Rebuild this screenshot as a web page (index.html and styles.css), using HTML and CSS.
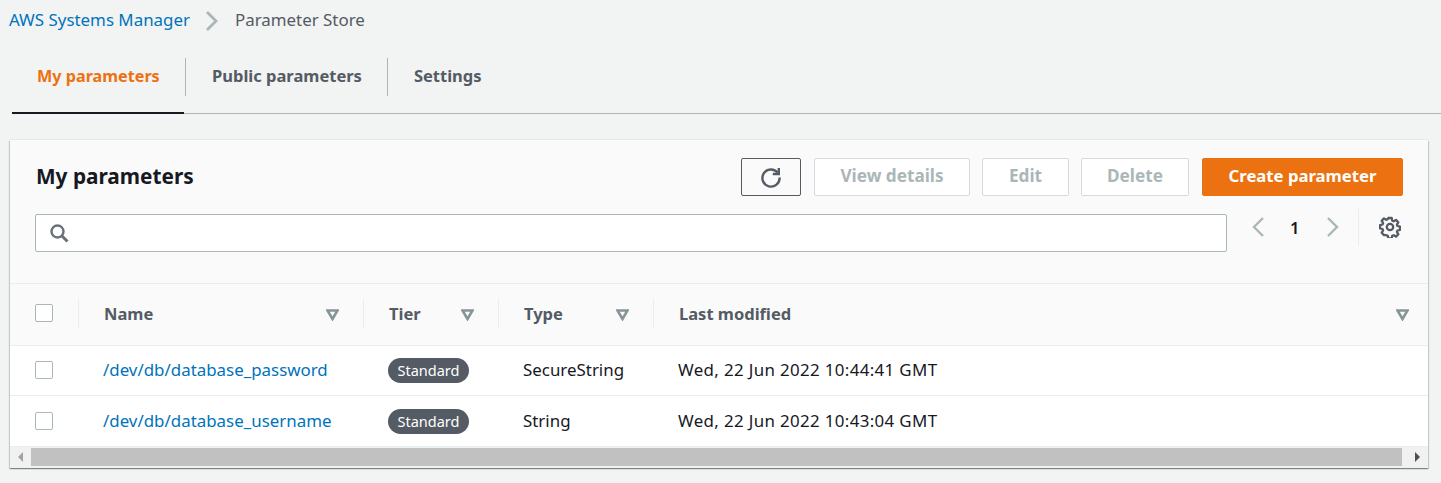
FILE: index.html
```html
<!DOCTYPE html>
<html lang="en">
<head>
    <meta charset="UTF-8">
    <meta name="viewport" content="width=device-width, initial-scale=1.0">
    <title>Parameter Store</title>
    <link rel="stylesheet" href="styles.css">
</head>
<body>
    <nav class="breadcrumb">
        <a href="#">AWS Systems Manager</a>
        <svg class="crumb-arrow" width="14" height="22" viewBox="0 0 14 22"><path d="M2 2l9 9-9 9" fill="none" stroke="#aab7b8" stroke-width="2.800"/></svg>
        <span>Parameter Store</span>
    </nav>

    <div class="tabs">
        <a class="tab active" href="#">My parameters</a>
        <a class="tab" href="#">Public parameters</a>
        <a class="tab" href="#">Settings</a>
    </div>

    <section class="card">
        <div class="card-top">
            <div class="title-row">
                <h1>My parameters</h1>
                <div class="actions">
                    <button class="btn refresh" aria-label="Refresh">
                        <svg width="22" height="22" viewBox="0 0 22 22"><path d="M17.600 6.500A8.600 8.600 0 1 0 19.600 11.500" fill="none" stroke="#545b64" stroke-width="2.400"/><path d="M18.800 2v6h-6" fill="none" stroke="#545b64" stroke-width="2.400"/></svg>
                    </button>
                    <button class="btn disabled details">View details</button>
                    <button class="btn disabled edit">Edit</button>
                    <button class="btn disabled delete">Delete</button>
                    <button class="btn primary">Create parameter</button>
                </div>
            </div>
            <div class="search-row">
                <div class="search">
                    <svg width="20" height="20" viewBox="0 0 20 20"><circle cx="8.500" cy="8.500" r="6" fill="none" stroke="#687078" stroke-width="2.400"/><path d="M13 13l5.500 5.500" stroke="#687078" stroke-width="3"/></svg>
                </div>
                <div class="pager">
                    <svg width="14" height="22" viewBox="0 0 14 22"><path d="M12 2L3 11l9 9" fill="none" stroke="#aab7b8" stroke-width="2.400"/></svg>
                    <span class="page-num">1</span>
                    <svg class="pager-next" width="14" height="22" viewBox="0 0 14 22"><path d="M2 2l9 9-9 9" fill="none" stroke="#aab7b8" stroke-width="2.400"/></svg>
                </div>
                <div class="prefs">
                    <svg width="22" height="22" viewBox="0 0 22 22"><path d="M9.300 2h3.400l.5 2.600 1.500.7 2.300-1.400 2.300 2.400-1.400 2.200.6 1.500 2.500.6v3.300l-2.500.6-.6 1.500 1.400 2.200-2.300 2.400-2.300-1.400-1.500.6-.5 2.700H9.300l-.5-2.700-1.500-.6L5 19.100l-2.300-2.400 1.400-2.200-.6-1.500-2.500-.6V9.100l2.500-.6.600-1.500-1.400-2.200L5 2.400l2.300 1.400 1.500-.7z" fill="none" stroke="#545b64" stroke-width="2.300" stroke-linejoin="round"/><circle cx="11" cy="11" r="3.200" fill="none" stroke="#545b64" stroke-width="2.300"/></svg>
                </div>
            </div>
        </div>

        <table class="params">
            <colgroup>
                <col class="col-check">
                <col class="col-name">
                <col class="col-tier">
                <col class="col-type">
                <col>
            </colgroup>
            <thead>
                <tr>
                    <th><span class="checkbox"></span></th>
                    <th><div class="th-inner"><span class="th-label">Name</span><svg class="sort" width="13" height="12" viewBox="0 0 13 12"><path d="M1.500 1.500h10L6.500 10z" fill="none" stroke="#879596" stroke-width="2.600"/></svg></div></th>
                    <th><div class="th-inner"><span class="th-label">Tier</span><svg class="sort" width="13" height="12" viewBox="0 0 13 12"><path d="M1.500 1.500h10L6.500 10z" fill="none" stroke="#879596" stroke-width="2.600"/></svg></div></th>
                    <th><div class="th-inner"><span class="th-label">Type</span><svg class="sort" width="13" height="12" viewBox="0 0 13 12"><path d="M1.500 1.500h10L6.500 10z" fill="none" stroke="#879596" stroke-width="2.600"/></svg></div></th>
                    <th><div class="th-inner last"><span class="th-label">Last modified</span><svg class="sort" width="13" height="12" viewBox="0 0 13 12"><path d="M1.500 1.500h10L6.500 10z" fill="none" stroke="#879596" stroke-width="2.600"/></svg></div></th>
                </tr>
            </thead>
            <tbody>
                <tr>
                    <td><span class="checkbox"></span></td>
                    <td><a href="#">/dev/db/database_password</a></td>
                    <td><span class="badge">Standard</span></td>
                    <td>SecureString</td>
                    <td class="date">Wed, 22 Jun 2022 10:44:41 GMT</td>
                </tr>
                <tr class="row-last">
                    <td><span class="checkbox"></span></td>
                    <td><a href="#">/dev/db/database_username</a></td>
                    <td><span class="badge">Standard</span></td>
                    <td>String</td>
                    <td class="date">Wed, 22 Jun 2022 10:43:04 GMT</td>
                </tr>
            </tbody>
        </table>

        <div class="scrollbar">
            <span class="arrow left"></span>
            <span class="thumb"></span>
            <span class="arrow right"></span>
        </div>
    </section>
</body>
</html>
```

FILE: styles.css
```css
* {
    box-sizing: border-box;
}
body {
    margin: 0;
    height: 483px;
    overflow: hidden;
    background-color: #f2f3f3;
    font-family: "Noto Sans", Arial, sans-serif;
    font-size: 16.9px;
    color: #16191f;
}
a {
    color: #0073bb;
    text-decoration: none;
}
.breadcrumb {
    display: flex;
    align-items: center;
    height: 40px;
    padding: 0 0 2px 9px;
    color: #545b64;
}
.crumb-arrow {
    margin: 4px 16px 0 15px;
}
.tabs {
    display: flex;
    height: 74px;
    margin-left: 12px;
    border-bottom: 1px solid #aab7b8;
}
.tab {
    display: flex;
    align-items: center;
    height: 38px;
    margin-top: 18px;
    padding: 0 25px 3px 26px;
    border-left: 1px solid #aab7b8;
    color: #545b64;
    font-size: 16.500px;
    font-weight: 700;
    white-space: nowrap;
}
.tab.active {
    position: relative;
    width: 173px;
    padding-left: 25px;
    padding-right: 0;
    border-left: none;
    color: #ec7211;
    font-size: 16.200px;
}
.tab.active::after {
    content: "";
    position: absolute;
    left: 0;
    right: 1px;
    top: 54px;
    height: 2px;
    background-color: #16191f;
}
.card {
    margin: 26px 13px 0 10px;
    background: white;
    box-shadow: 0 -1px 0 0 #e6e9e9, 0 1px 1px 0 rgba(0, 28, 36, 0.3), 1px 1px 1px 0 rgba(0, 28, 36, 0.15), -1px 1px 1px 0 rgba(0, 28, 36, 0.15);
}
.card-top {
    height: 144px;
    padding: 18px 25px 0 25px;
    background-color: #fafafa;
    border-bottom: 1px solid #eaeded;
}
.title-row {
    display: flex;
    justify-content: space-between;
    align-items: center;
    height: 38px;
}
h1 {
    margin: -2px 0 0 1px;
    font-size: 20.800px;
    font-weight: 700;
}
.actions {
    display: flex;
    gap: 12px;
}
.btn {
    height: 38px;
    padding: 0 0 3px 0;
    border: 1px solid #d5dbdb;
    border-radius: 2px;
    background: white;
    font-family: inherit;
    font-size: 16.700px;
    font-weight: 700;
}
.refresh {
    width: 60px;
    margin-right: 1px;
    padding: 0;
    border-color: #545b64;
    background: #fafafa;
    display: flex;
    align-items: center;
    justify-content: center;
}
.disabled {
    color: #aab7b8;
    font-size: 17.200px;
}
.details {
    width: 156px;
}
.edit {
    width: 87px;
}
.delete {
    width: 108px;
    margin-right: 1px;
}
.primary {
    width: 201px;
    border-color: #ec7211;
    background-color: #ec7211;
    color: white;
}
.search-row {
    display: flex;
    align-items: flex-start;
    margin-top: 18px;
}
.search {
    display: flex;
    align-items: center;
    width: 1192px;
    height: 38px;
    padding-left: 13px;
    background: white;
    border: 1px solid #aab7b8;
    border-radius: 2px;
}
.pager {
    display: flex;
    align-items: center;
    height: 26px;
    margin-left: 24px;
    gap: 25px;
}
.pager-next {
    margin-left: 2px;
}
.page-num {
    color: #16191f;
    font-size: 16.500px;
    font-weight: 600;
}
.prefs {
    display: flex;
    align-items: center;
    height: 37px;
    margin-top: -5px;
    margin-left: 18px;
    padding: 0 0 2px 20px;
    border-left: 1px solid #eaeded;
}
.params {
    width: 100%;
    border-collapse: collapse;
    table-layout: fixed;
}
.col-check {
    width: 68px;
}
.col-name {
    width: 285px;
}
.col-tier {
    width: 135px;
}
.col-type {
    width: 155px;
}
th {
    height: 61px;
    padding: 0;
    background-color: #fafafa;
    border-bottom: 1px solid #eaeded;
    font-size: 16.500px;
    font-weight: 700;
    color: #545b64;
    text-align: left;
}
th:first-child {
    padding: 0 0 3px 25px;
}
.th-inner {
    display: flex;
    justify-content: space-between;
    align-items: center;
    height: 30px;
    padding: 0 24px 0 25px;
    border-left: 1px solid #eaeded;
}
.th-inner.last {
    padding-right: 19px;
}
.th-label {
    margin-bottom: 2px;
}
.sort {
    margin-top: 1px;
}
td {
    height: 50px;
    padding: 0 0 1px 25px;
    border-bottom: 1px solid #eaeded;
}
.row-last td {
    height: 51px;
    padding-bottom: 0;
}
.date {
    letter-spacing: 0.35px;
}
.checkbox {
    display: block;
    width: 18px;
    height: 18px;
    background: white;
    border: 1px solid #aab7b8;
    border-radius: 2px;
}
.badge {
    display: inline-block;
    height: 25px;
    margin-top: 2px;
    padding: 0 9.500px;
    border-radius: 13px;
    background-color: #545b64;
    color: white;
    font-size: 14.500px;
    line-height: 25px;
}
.scrollbar {
    display: flex;
    align-items: center;
    height: 21px;
    background-color: #f1f1f1;
}
.thumb {
    width: 1371px;
    height: 18px;
    margin: 0 9px 0 8px;
    background-color: #c1c1c1;
}
.arrow {
    width: 0;
    height: 0;
    border-top: 5px solid transparent;
    border-bottom: 5px solid transparent;
}
.arrow.left {
    margin-left: 8px;
    border-right: 5px solid #a3a3a3;
}
.arrow.right {
    margin-left: 4px;
    border-left: 5px solid #505050;
}
```
